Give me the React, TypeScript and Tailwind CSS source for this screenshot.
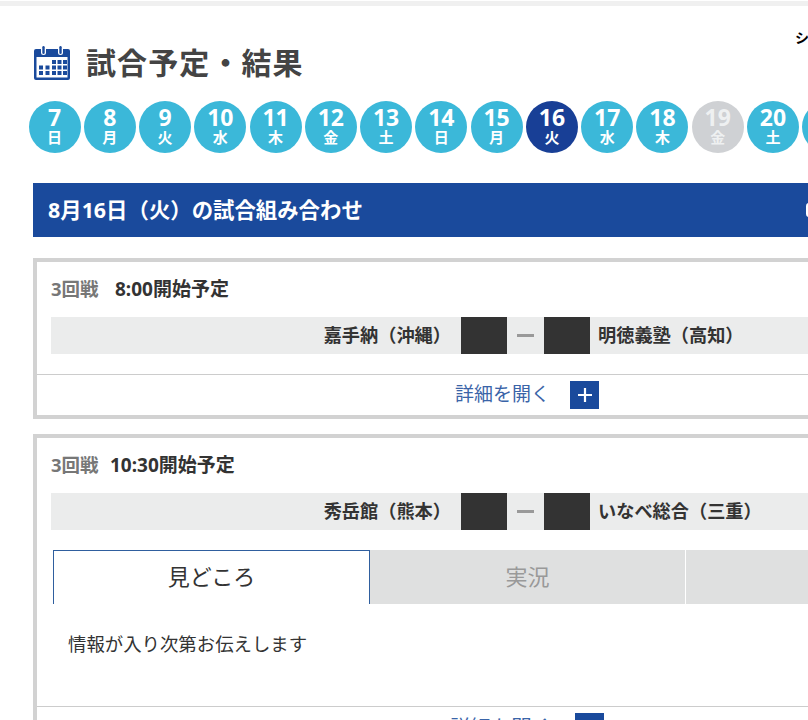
const FONT = "font-['Noto_Sans','Noto_Sans_CJK_JP',sans-serif]";

const DAYS = [
  { d: 7, w: '日' },
  { d: 8, w: '月' },
  { d: 9, w: '火' },
  { d: 10, w: '水' },
  { d: 11, w: '木' },
  { d: 12, w: '金' },
  { d: 13, w: '土' },
  { d: 14, w: '日' },
  { d: 15, w: '月' },
  { d: 16, w: '火', active: true },
  { d: 17, w: '水' },
  { d: 18, w: '木' },
  { d: 19, w: '金', off: true },
  { d: 20, w: '土' },
  { d: 21, w: '日' },
];

function CalendarIcon() {
  return (
    <svg width="38" height="36" viewBox="0 0 38 36" className="shrink-0">
      <rect x="1" y="4" width="36" height="31" rx="2" fill="#1a4a9c" />
      <rect x="3.5" y="12" width="31" height="20.5" fill="#fff" />
      <rect x="8" y="0.5" width="5" height="9.5" rx="2.5" fill="#fff" />
      <rect x="9.3" y="1" width="2.4" height="8" rx="1.2" fill="#1a4a9c" />
      <rect x="25" y="0.5" width="5" height="9.5" rx="2.5" fill="#fff" />
      <rect x="26.3" y="1" width="2.4" height="8" rx="1.2" fill="#1a4a9c" />
      {[
        [19, 15],
        [24.5, 15],
        [30, 15],
        [6, 20.5],
        [12.5, 20.5],
        [19, 20.5],
        [24.5, 20.5],
        [30, 20.5],
        [6, 26],
        [12.5, 26],
        [19, 26],
        [24.5, 26],
        [30, 26],
      ].map(([x, y]) => (
        <rect key={`${x}-${y}`} x={x} y={y} width="4" height="4" fill="#1a4a9c" />
      ))}
    </svg>
  );
}

function DayCircle({ d, w, active, off }: { d: number; w: string; active?: boolean; off?: boolean }) {
  const color = active ? 'bg-[#183f96] text-white' : off ? 'bg-[#cfd1d4] text-[#eef0f1]' : 'bg-[#3bb8d9] text-white';
  return (
    <div className={`flex h-[52px] w-[52px] shrink-0 flex-col items-center justify-center rounded-full pb-[3px] font-bold ${color}`}>
      <span className="text-[23px] leading-[23px]">{d}</span>
      <span className="text-[15px] leading-[17px]">{w}</span>
    </div>
  );
}

function ScoreRow({ home, away }: { home: string; away: string }) {
  return (
    <div className="ml-[14px] flex h-[37px] w-[949px] items-center bg-[#ebecec] text-[18.2px] font-bold text-[#333]">
      <div className="w-[400px] whitespace-nowrap text-right">{home}</div>
      <div className="ml-[10px] h-full w-[46px] bg-[#333]" />
      <div className="mx-[10px] h-[3px] w-[17px] bg-[#999]" />
      <div className="h-full w-[46px] bg-[#333]" />
      <div className="ml-[8px] whitespace-nowrap">{away}</div>
    </div>
  );
}

function PlusBox({ className }: { className: string }) {
  return (
    <span className={`flex items-center justify-center bg-[#1a4a9c] ${className}`}>
      <svg width="16" height="16" viewBox="0 0 16 16">
        <path d="M8 1v14M1 8h14" stroke="#fff" strokeWidth="2.2" />
      </svg>
    </span>
  );
}

export default function App() {
  return (
    <div className={`h-[720px] w-[808px] overflow-hidden bg-white ${FONT}`}>
      {/* top strip */}
      <div className="mt-[1px] h-[5px] bg-[#f0f0f0]" />

      <div className="w-[1021px] pl-[33px]">
        {/* heading */}
        <div className="relative flex h-[95px] items-start pt-[39px]">
          <CalendarIcon />
          <h1 className="ml-[15px] text-[30px] font-bold leading-[36px] tracking-[1.1px] text-[#444]">試合予定・結果</h1>
          <span className="absolute left-[762px] top-[21px] whitespace-nowrap text-[14px] font-bold text-black">シェア</span>
        </div>

        {/* date picker */}
        <div className="-ml-[4.5px] flex gap-[3.28px]">
          {DAYS.map((day) => (
            <DayCircle key={day.d} {...day} />
          ))}
        </div>

        {/* banner */}
        <div className="mt-[30px] flex h-[54px] items-center bg-[#1a4a9c] pl-[15px]">
          <span className="w-[758px] text-[21.4px] font-bold text-white">8月16日（火）の試合組み合わせ</span>
          <span className="h-[14px] w-[20px] rounded-[3px] bg-white" />
        </div>

        {/* game 1 */}
        <div className="mt-[21px] h-[161px] border-4 border-[#d2d2d2]">
          <div className="flex h-[55px] items-end pb-[16px] pl-[14px] font-bold leading-[24px]">
            <span className="w-[64px] text-[18.5px] text-[#777]">3回戦</span>
            <span className="text-[19px] text-[#333]">8:00開始予定</span>
          </div>
          <ScoreRow home="嘉手納（沖縄）" away="明徳義塾（高知）" />
          <div className="mt-[20px] flex h-[40px] items-start justify-center border-t border-t-[#ccc] pt-[6px]">
            <span className="text-[19px] leading-[27px] text-[#3a64a8]">詳細を開く</span>
            <PlusBox className="ml-[20px] h-[28px] w-[29px]" />
          </div>
        </div>

        {/* game 2 */}
        <div className="mt-[15px] h-[400px] border-4 border-[#d2d2d2]">
          <div className="flex h-[55px] items-end pb-[16px] pl-[14px] font-bold leading-[24px]">
            <span className="w-[59px] text-[18.5px] text-[#777]">3回戦</span>
            <span className="text-[19px] text-[#333]">10:30開始予定</span>
          </div>
          <ScoreRow home="秀岳館（熊本）" away="いなべ総合（三重）" />

          {/* tabs */}
          <div className="ml-[16px] mt-[20px] flex h-[54px]">
            <div className="flex w-[317px] items-center justify-center border-x border-t border-[#2f5e9e] pb-[2px] text-[22px] text-[#333]">見どころ</div>
            <div className="flex w-[315px] items-center justify-center bg-[#dfe0e0] pb-[2px] text-[22px] text-[#999]">実況</div>
            <div className="ml-[1px] w-[316px] bg-[#dfe0e0]" />
          </div>
          <p className="ml-[31px] mt-[27px] text-[18.4px] leading-[26px] text-[#333]">情報が入り次第お伝えします</p>
          <div className="mt-[49px] flex h-[40px] items-start justify-center border-t border-t-[#ccc] pt-[6px]">
            <span className="text-[20.5px] leading-[28px] text-[#3a64a8]">詳細を開く</span>
            <PlusBox className="ml-[23px] h-[29px] w-[29px]" />
          </div>
        </div>
      </div>
    </div>
  );
}
